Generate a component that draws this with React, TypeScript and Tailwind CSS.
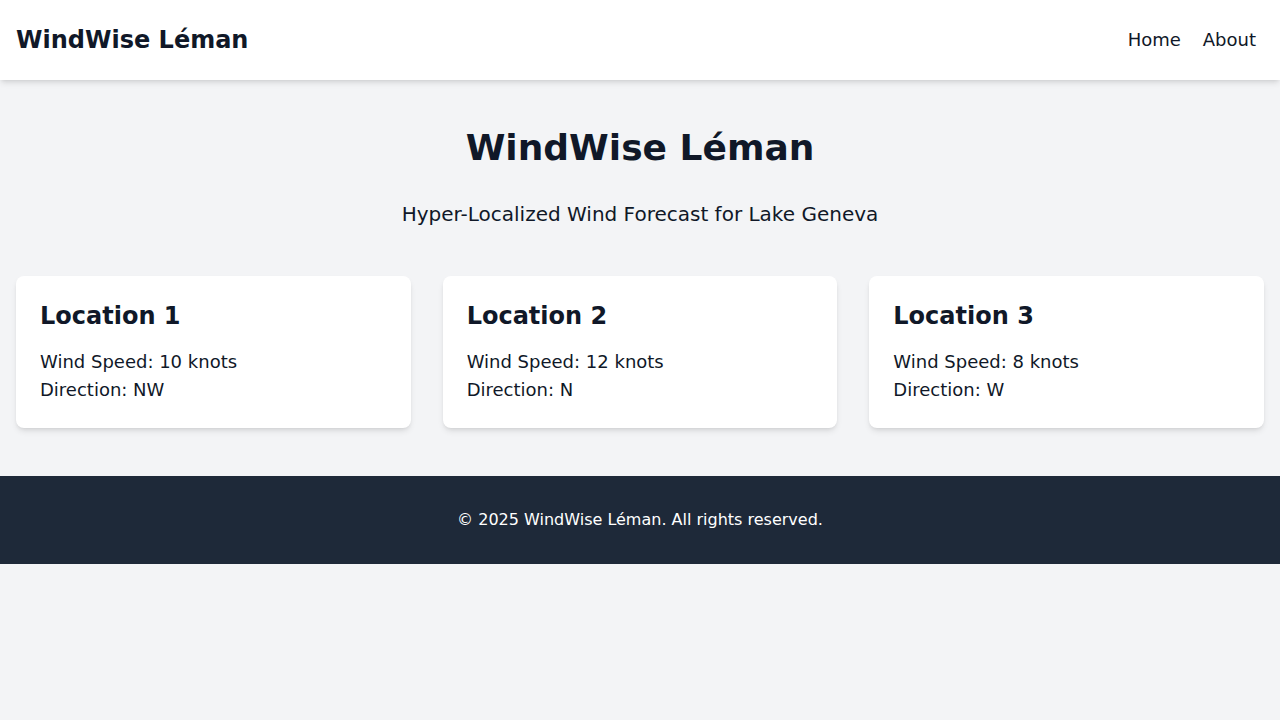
import React from "react";

type Spot = { name: string; speed: number; dir: string };

const spots: Spot[] = [
  { name: "Location 1", speed: 10, dir: "NW" },
  { name: "Location 2", speed: 12, dir: "N" },
  { name: "Location 3", speed: 8, dir: "W" },
];

const App = () => {
  return (
    <div className="min-h-screen bg-gray-100 text-gray-900 font-['DejaVu_Sans',sans-serif]">
      {/* Header */}
      <header className="bg-white shadow-md">
        <div className="flex items-center justify-between px-4 py-6">
          <h1 className="text-2xl font-bold">WindWise Léman</h1>
          <nav className="flex gap-[22px] pr-2 text-lg">
            <a href="#">Home</a>
            <a href="#">About</a>
          </nav>
        </div>
      </header>

      {/* Main */}
      <main className="px-4 py-12">
        <section className="text-center mb-12">
          <h2 className="text-4xl font-bold mb-8">WindWise Léman</h2>
          <p className="text-xl">Hyper-Localized Wind Forecast for Lake Geneva</p>
        </section>

        <div className="grid grid-cols-3 gap-8">
          {spots.map((s) => (
            <div key={s.name} className="bg-white rounded-lg shadow-md p-6">
              <h3 className="text-2xl font-bold mb-4">{s.name}</h3>
              <p className="text-lg">Wind Speed: {s.speed} knots</p>
              <p className="text-lg">Direction: {s.dir}</p>
            </div>
          ))}
        </div>
      </main>

      {/* Footer */}
      <footer className="bg-gray-800 text-white text-center py-8">
        <p>© 2025 WindWise Léman. All rights reserved.</p>
      </footer>
    </div>
  );
};

export default App;
